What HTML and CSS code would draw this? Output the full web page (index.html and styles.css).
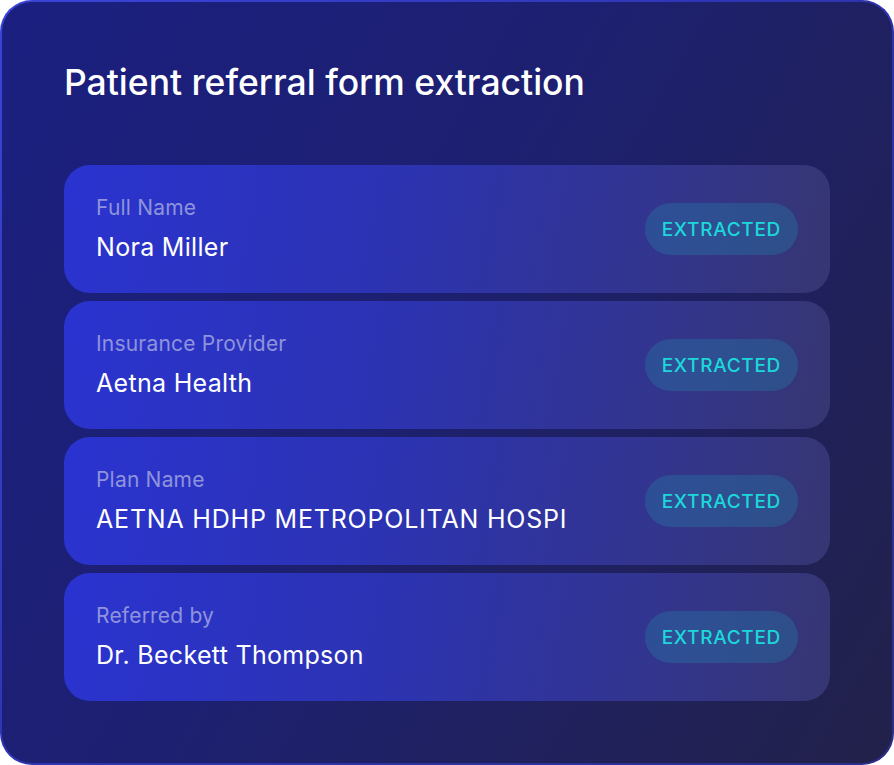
FILE: index.html
```html
<!DOCTYPE html>
<html lang="en">
<head>
<meta charset="utf-8">
<title>Patient referral form extraction</title>
<link rel="stylesheet" href="styles.css">
</head>
<body>
<main class="card">
  <h1 class="title">Patient referral form extraction</h1>
  <div class="fields">
    <div class="field">
      <div class="field-text">
        <div class="label">Full Name</div>
        <div class="value">Nora Miller</div>
      </div>
      <span class="badge">EXTRACTED</span>
    </div>
    <div class="field">
      <div class="field-text">
        <div class="label">Insurance Provider</div>
        <div class="value">Aetna Health</div>
      </div>
      <span class="badge">EXTRACTED</span>
    </div>
    <div class="field">
      <div class="field-text">
        <div class="label">Plan Name</div>
        <div class="value caps">AETNA HDHP METROPOLITAN HOSPI</div>
      </div>
      <span class="badge">EXTRACTED</span>
    </div>
    <div class="field">
      <div class="field-text">
        <div class="label">Referred by</div>
        <div class="value">Dr. Beckett Thompson</div>
      </div>
      <span class="badge">EXTRACTED</span>
    </div>
  </div>
</main>
</body>
</html>
```

FILE: styles.css
```css
* { box-sizing: border-box; }
html, body { margin: 0; padding: 0; background: #ffffff; }
body {
  width: 894px;
  height: 765px;
  font-family: Inter, "Noto Sans", "Liberation Sans", sans-serif;
}
.card {
  width: 894px;
  height: 765px;
  border-radius: 32px;
  border: 2px solid transparent;
  background:
    linear-gradient(120deg, #1b1f80 0%, #1d2070 45%, #22214a 100%) padding-box,
    linear-gradient(135deg, #3a44d8 0%, #2e34b0 50%, #2b2f8a 100%) border-box;
  padding: 58px 62px 62px 62px;
  display: flex;
  flex-direction: column;
}
.title {
  margin: 0;
  color: #ffffff;
  font-size: 35.5px;
  font-weight: 500;
  letter-spacing: 0;
  line-height: 46px;
}
.fields {
  margin-top: 59px;
  display: flex;
  flex-direction: column;
  gap: 8px;
}
.field {
  height: 128px;
  border-radius: 26px;
  background: linear-gradient(100deg, #2a33d0 0%, #2c33b4 40%, #33358a 80%, #363672 100%);
  display: flex;
  align-items: center;
  justify-content: space-between;
  padding: 0 32px 0 32px;
}
.field-text {
  display: flex;
  flex-direction: column;
  gap: 12px;
}
.label {
  color: #8f93dc;
  font-size: 21px;
  letter-spacing: 0.2px;
  line-height: 24px;
}
.value {
  color: #ffffff;
  font-size: 25px;
  line-height: 30px;
  font-weight: 400;
  letter-spacing: 0.3px;
}
.value.caps {
  letter-spacing: 0.8px;
}
.badge {
  height: 52px;
  padding: 0 17px;
  border-radius: 26px;
  background: rgba(40, 110, 160, 0.45);
  color: #1cd8da;
  font-size: 19px;
  font-weight: 500;
  letter-spacing: 0.7px;
  display: flex;
  align-items: center;
}
```
